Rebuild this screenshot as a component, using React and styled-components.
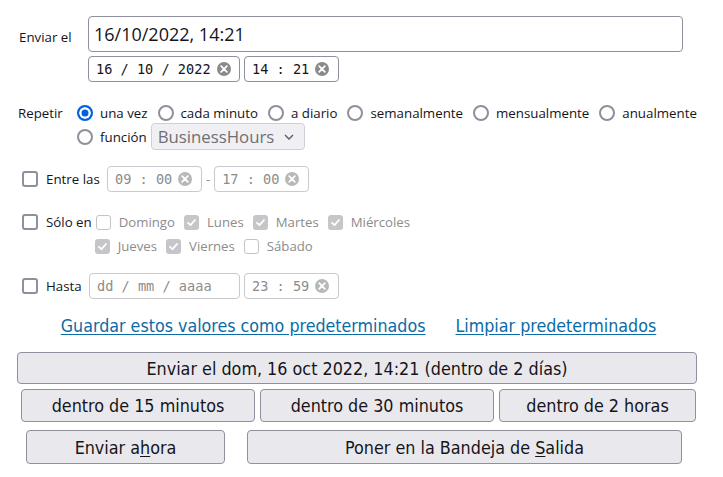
import React from "react";
import styled, { createGlobalStyle } from "styled-components";

const GlobalStyle = createGlobalStyle`
	body {
		margin: 0;
		background: #fff;
		font-family: "Open Sans", "Noto Sans", sans-serif;
		color: #15141a;
	}
`;

const Page = styled.div`
	width: 723px;
	height: 477px;
	padding-top: 16px;
	box-sizing: border-box;
	overflow: hidden;
`;

const Row = styled.div`
	display: flex;
	align-items: ${(p) => p.$align || "center"};
	padding-left: ${(p) => p.$left || 0}px;
	margin-top: ${(p) => p.$top || 0}px;
	gap: ${(p) => p.$gap || 0}px;
`;

const Label = styled.span`
	font-size: 13.3px;
	width: ${(p) => (p.$width ? `${p.$width}px` : "auto")};
	flex-shrink: 0;
	margin-top: ${(p) => p.$shift || 0}px;
	margin-left: ${(p) => p.$ml || 0}px;
`;

const TextBox = styled.div`
	width: 595px;
	height: 36px;
	box-sizing: border-box;
	border: 1px solid #8f8f9d;
	border-radius: 4px;
	padding: 0 5px;
	display: flex;
	align-items: center;
	font-size: 18px;
`;

const SpinField = styled.div`
	width: ${(p) => p.$width}px;
	height: 26px;
	box-sizing: border-box;
	border: 1px solid ${(p) => (p.$disabled ? "#c9c9cf" : "#8f8f9d")};
	border-radius: 4px;
	display: flex;
	align-items: center;
	padding-left: 7px;
	margin-left: ${(p) => p.$ml || 0}px;
	font-family: "DejaVu Sans Mono", monospace;
	font-size: 13.6px;
	color: ${(p) => (p.$disabled ? "#8c8c8c" : "#15141a")};
	flex-shrink: 0;
`;

const ClearIcon = styled.span`
	width: 14px;
	height: 14px;
	margin-left: 6px;
	border-radius: 50%;
	background: ${(p) => (p.$disabled ? "#b8b8b8" : "#8a8a8a")};
	display: inline-flex;
	align-items: center;
	justify-content: center;
`;

const Radio = styled.span`
	width: 16px;
	height: 16px;
	box-sizing: border-box;
	border-radius: 50%;
	border: 2px solid ${(p) => (p.$checked ? "#0060df" : "#8f8f9d")};
	background: ${(p) => (p.$checked ? "#0060df" : "#fff")};
	box-shadow: ${(p) => (p.$checked ? "inset 0 0 0 2.5px #fff" : "none")};
	flex-shrink: 0;
`;

const Option = styled.label`
	display: inline-flex;
	align-items: center;
	gap: 7px;
	font-size: 13.3px;
	margin-right: ${(p) => (p.$last ? 0 : 10)}px;
`;

const Check = styled.span`
	width: 16px;
	height: 16px;
	box-sizing: border-box;
	border: 2px solid #8f8f9d;
	border-radius: 3px;
	flex-shrink: 0;
`;

const DayBox = styled.span`
	width: 15px;
	height: 15px;
	box-sizing: border-box;
	border-radius: 3px;
	border: ${(p) => (p.$checked ? "none" : "1.5px solid #c4c4c8")};
	background: ${(p) => (p.$checked ? "#c6c6ca" : "#fff")};
	display: inline-flex;
	align-items: center;
	justify-content: center;
	flex-shrink: 0;
`;

const Day = styled.span`
	display: inline-flex;
	align-items: center;
	gap: 8px;
	font-size: 13.2px;
	color: #8c8c8c;
	margin-right: 9px;
`;

const Days = styled.div`
	display: flex;
	flex-direction: column;
	gap: 6px;
	margin-left: 4px;
`;

const DayLine = styled.div`
	display: flex;
	align-items: center;
	margin-left: ${(p) => p.$indent || 0}px;
`;

const Select = styled.div`
	width: 154px;
	height: 27px;
	box-sizing: border-box;
	margin-left: 4px;
	border: 1px solid #cfcfd8;
	border-radius: 4px;
	background: #f0f0f4;
	display: flex;
	align-items: center;
	justify-content: space-between;
	padding: 0 9px 0 6px;
	font-size: 16.8px;
	color: #6f6f73;
`;

const Links = styled.div`
	display: flex;
	justify-content: center;
	gap: 30px;
	margin-top: 17px;
	padding-right: 6px;
`;

const Link = styled.a`
	font-family: "DejaVu Sans Condensed", "DejaVu Sans", sans-serif;
	font-size: 17.7px;
	color: #0b6ba6;
	text-decoration: underline;
	text-underline-offset: 2px;
	cursor: pointer;
`;

const ButtonRow = styled.div`
	display: grid;
	box-sizing: border-box;
	grid-template-columns: ${(p) => p.$cols};
	column-gap: ${(p) => p.$gap || 0}px;
	padding-left: ${(p) => p.$left}px;
	width: ${(p) => p.$width}px;
	margin-top: ${(p) => p.$top}px;
`;

const Button = styled.button`
	height: ${(p) => p.$height}px;
	box-sizing: border-box;
	background: #e9e9ed;
	border: 1px solid #8f8f9d;
	border-radius: 4px;
	font-family: "DejaVu Sans Condensed", "DejaVu Sans", sans-serif;
	font-size: 17.8px;
	color: #15141a;
	padding: 0;
	u {
		text-underline-offset: 2px;
	}
`;

const Dash = styled.span`
	font-size: 13px;
	color: #8c8c8c;
	margin: 0 4px;
`;

const Cross = ({ disabled }) => (
	<ClearIcon $disabled={disabled}>
		<svg width="8" height="8" viewBox="0 0 8 8">
			<path d="M1.2 1.2 L6.8 6.8 M6.8 1.2 L1.2 6.8" stroke="#fff" strokeWidth="1.8" strokeLinecap="round" />
		</svg>
	</ClearIcon>
);

const Tick = () => (
	<svg width="11" height="11" viewBox="0 0 11 11">
		<path d="M2 5.8 L4.5 8.2 L9 3" stroke="#fff" strokeWidth="1.8" fill="none" strokeLinecap="round" strokeLinejoin="round" />
	</svg>
);

const repeats = [
	{ label: "una vez", checked: true },
	{ label: "cada minuto" },
	{ label: "a diario" },
	{ label: "semanalmente" },
	{ label: "mensualmente" },
	{ label: "anualmente" },
];

const daysTop = [
	{ name: "Domingo", on: false },
	{ name: "Lunes", on: true },
	{ name: "Martes", on: true },
	{ name: "Miércoles", on: true },
];

const daysBottom = [
	{ name: "Jueves", on: true },
	{ name: "Viernes", on: true },
	{ name: "Sábado", on: false },
];

const DayList = ({ days }) =>
	days.map((d) => (
		<Day key={d.name}>
			<DayBox $checked={d.on}>{d.on && <Tick />}</DayBox>
			{d.name}
		</Day>
	));

const App = () => {
	return (
		<Page>
			<GlobalStyle />

			<Row $left={19}>
				<Label $width={69} $shift={6}>Enviar el</Label>
				<TextBox>16/10/2022, 14:21</TextBox>
			</Row>
			<Row $left={88} $top={4} $gap={4}>
				<SpinField $width={152}>
					16 / 10 / 2022
					<Cross />
				</SpinField>
				<SpinField $width={95}>
					14 : 21
					<Cross />
				</SpinField>
			</Row>

			<Row $left={18} $top={22}>
				<Label $width={59}>Repetir</Label>
				{repeats.map((r, i) => (
					<Option key={r.label} $last={i === repeats.length - 1}>
						<Radio $checked={r.checked} />
						{r.label}
					</Option>
				))}
			</Row>
			<Row $left={77} $top={1}>
				<Option $last>
					<Radio />
					función
				</Option>
				<Select>
					BusinessHours
					<svg width="12" height="8" viewBox="0 0 12 8">
						<path d="M2 2 L6 6 L10 2" stroke="#5b5b66" strokeWidth="1.4" fill="none" />
					</svg>
				</Select>
			</Row>

			<Row $left={22} $top={16}>
				<Check />
				<Label $width={61} $ml={8}>Entre las</Label>
				<SpinField $width={95} $disabled>
					09 : 00
					<Cross disabled />
				</SpinField>
				<Dash>-</Dash>
				<SpinField $width={95} $disabled>
					17 : 00
					<Cross disabled />
				</SpinField>
			</Row>

			<Row $left={22} $top={21} $align="flex-start">
				<Check style={{ marginTop: 1 }} />
				<Label $ml={8}>Sólo en</Label>
				<Days>
					<DayLine>
						<DayList days={daysTop} />
					</DayLine>
					<DayLine $indent={-1}>
						<DayList days={daysBottom} />
					</DayLine>
				</Days>
			</Row>

			<Row $left={22} $top={18}>
				<Check />
				<Label $width={43} $ml={8}>Hasta</Label>
				<SpinField $width={151} $disabled>
					dd / mm / aaaa
				</SpinField>
				<SpinField $width={95} $disabled $ml={4}>
					23 : 59
					<Cross disabled />
				</SpinField>
			</Row>

			<Links>
				<Link>Guardar estos valores como predeterminados</Link>
				<Link>Limpiar predeterminados</Link>
			</Links>

			<ButtonRow $cols="1fr" $left={17} $width={697} $top={16}>
				<Button $height={32}>Enviar el dom, 16 oct 2022, 14:21 (dentro de 2 días)</Button>
			</ButtonRow>
			<ButtonRow $cols="234px 234px 197px" $gap={5} $left={21} $width={696} $top={5}>
				<Button $height={33}>dentro de 15 minutos</Button>
				<Button $height={33}>dentro de 30 minutos</Button>
				<Button $height={33}>dentro de 2 horas</Button>
			</ButtonRow>
			<ButtonRow $cols="199px 435px" $gap={22} $left={26} $width={682} $top={8}>
				<Button $height={34}>
					Enviar a<u>h</u>ora
				</Button>
				<Button $height={34}>
					Poner en la Bandeja de <u>S</u>alida
				</Button>
			</ButtonRow>
		</Page>
	);
};

export default App;
